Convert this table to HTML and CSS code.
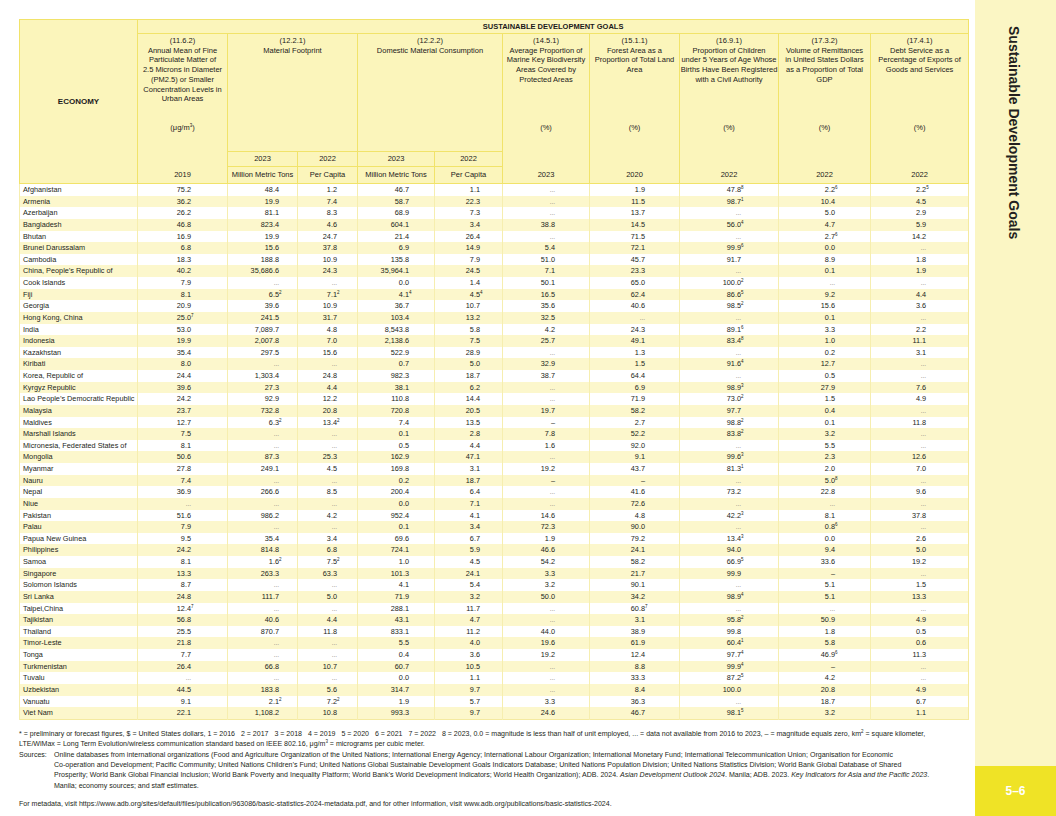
FILE: index.html
```html
<!DOCTYPE html>
<html lang="en">
<head>
<meta charset="utf-8">
<title>Sustainable Development Goals</title>
<link rel="stylesheet" href="styles.css">
</head>
<body>
<div class="page">
  <main class="main">
    <table class="sdg">
      <colgroup>
        <col class="w-econ"><col class="w1"><col class="w2"><col class="w3"><col class="w4"><col class="w5"><col class="w6"><col class="w7"><col class="w8"><col class="w9"><col class="w10">
      </colgroup>
      <thead>
        <tr class="h-top">
          <th rowspan="4" class="econ">ECONOMY</th>
          <th colspan="10" class="goals">SUSTAINABLE DEVELOPMENT GOALS</th>
        </tr>
        <tr class="h-desc">
          <th rowspan="3"><div class="hd"><div class="top">(11.6.2)<br>Annual Mean of Fine<br>Particulate Matter of<br>2.5 Microns in Diameter<br>(PM2.5) or Smaller<br>Concentration Levels in<br>Urban Areas</div><div class="unit">(μg/m<sup>3</sup>)</div><div class="yr">2019</div></div></th>
          <th colspan="2">(12.2.1)<br>Material Footprint</th>
          <th colspan="2">(12.2.2)<br>Domestic Material Consumption</th>
          <th rowspan="3"><div class="hd"><div class="top">(14.5.1)<br>Average Proportion of<br>Marine Key Biodiversity<br>Areas Covered by<br>Protected Areas</div><div class="unit">(%)</div><div class="yr">2023</div></div></th>
          <th rowspan="3"><div class="hd"><div class="top">(15.1.1)<br>Forest Area as a<br>Proportion of Total Land<br>Area</div><div class="unit">(%)</div><div class="yr">2020</div></div></th>
          <th rowspan="3"><div class="hd"><div class="top">(16.9.1)<br>Proportion of Children<br>under 5 Years of Age Whose<br>Births Have Been Registered<br>with a Civil Authority</div><div class="unit">(%)</div><div class="yr">2022</div></div></th>
          <th rowspan="3"><div class="hd"><div class="top">(17.3.2)<br>Volume of Remittances<br>in United States Dollars<br>as a Proportion of Total<br>GDP</div><div class="unit">(%)</div><div class="yr">2022</div></div></th>
          <th rowspan="3"><div class="hd"><div class="top">(17.4.1)<br>Debt Service as a<br>Percentage of Exports of<br>Goods and Services</div><div class="unit">(%)</div><div class="yr">2022</div></div></th>
        </tr>
        <tr class="h-year">
          <th>2023</th><th>2022</th><th>2023</th><th>2022</th>
        </tr>
        <tr class="h-unit">
          <th>Million Metric Tons</th><th>Per Capita</th><th>Million Metric Tons</th><th>Per Capita</th>
        </tr>
      </thead>
      <tbody>
        <tr><td>Afghanistan</td><td>75.2</td><td>48.4</td><td>1.2</td><td>46.7</td><td>1.1</td><td class="na">...</td><td>1.9</td><td>47.8<sup>8</sup></td><td>2.2<sup>6</sup></td><td>2.2<sup>5</sup></td></tr>
        <tr><td>Armenia</td><td>36.2</td><td>19.9</td><td>7.4</td><td>58.7</td><td>22.3</td><td class="na">...</td><td>11.5</td><td>98.7<sup>1</sup></td><td>10.4</td><td>4.5</td></tr>
        <tr><td>Azerbaijan</td><td>26.2</td><td>81.1</td><td>8.3</td><td>68.9</td><td>7.3</td><td class="na">...</td><td>13.7</td><td class="na">...</td><td>5.0</td><td>2.9</td></tr>
        <tr><td>Bangladesh</td><td>46.8</td><td>823.4</td><td>4.6</td><td>604.1</td><td>3.4</td><td>38.8</td><td>14.5</td><td>56.0<sup>4</sup></td><td>4.7</td><td>5.9</td></tr>
        <tr><td>Bhutan</td><td>16.9</td><td>19.9</td><td>24.7</td><td>21.4</td><td>26.4</td><td class="na">...</td><td>71.5</td><td class="na">...</td><td>2.7<sup>6</sup></td><td>14.2</td></tr>
        <tr><td>Brunei Darussalam</td><td>6.8</td><td>15.6</td><td>37.8</td><td>6.9</td><td>14.9</td><td>5.4</td><td>72.1</td><td>99.9<sup>6</sup></td><td>0.0</td><td class="na">...</td></tr>
        <tr><td>Cambodia</td><td>18.3</td><td>188.8</td><td>10.9</td><td>135.8</td><td>7.9</td><td>51.0</td><td>45.7</td><td>91.7</td><td>8.9</td><td>1.8</td></tr>
        <tr><td>China, People’s Republic of</td><td>40.2</td><td>35,686.6</td><td>24.3</td><td>35,964.1</td><td>24.5</td><td>7.1</td><td>23.3</td><td class="na">...</td><td>0.1</td><td>1.9</td></tr>
        <tr><td>Cook Islands</td><td>7.9</td><td class="na">...</td><td class="na">...</td><td>0.0</td><td>1.4</td><td>50.1</td><td>65.0</td><td>100.0<sup>2</sup></td><td class="na">...</td><td class="na">...</td></tr>
        <tr><td>Fiji</td><td>8.1</td><td>6.5<sup>2</sup></td><td>7.1<sup>2</sup></td><td>4.1<sup>4</sup></td><td>4.5<sup>4</sup></td><td>16.5</td><td>62.4</td><td>86.6<sup>5</sup></td><td>9.2</td><td>4.4</td></tr>
        <tr><td>Georgia</td><td>20.9</td><td>39.6</td><td>10.9</td><td>36.7</td><td>10.7</td><td>35.6</td><td>40.6</td><td>98.5<sup>2</sup></td><td>15.6</td><td>3.6</td></tr>
        <tr><td>Hong Kong, China</td><td>25.0<sup>7</sup></td><td>241.5</td><td>31.7</td><td>103.4</td><td>13.2</td><td>32.5</td><td class="na">...</td><td class="na">...</td><td>0.1</td><td class="na">...</td></tr>
        <tr><td>India</td><td>53.0</td><td>7,089.7</td><td>4.8</td><td>8,543.8</td><td>5.8</td><td>4.2</td><td>24.3</td><td>89.1<sup>6</sup></td><td>3.3</td><td>2.2</td></tr>
        <tr><td>Indonesia</td><td>19.9</td><td>2,007.8</td><td>7.0</td><td>2,138.6</td><td>7.5</td><td>25.7</td><td>49.1</td><td>83.4<sup>8</sup></td><td>1.0</td><td>11.1</td></tr>
        <tr><td>Kazakhstan</td><td>35.4</td><td>297.5</td><td>15.6</td><td>522.9</td><td>28.9</td><td class="na">...</td><td>1.3</td><td class="na">...</td><td>0.2</td><td>3.1</td></tr>
        <tr><td>Kiribati</td><td>8.0</td><td class="na">...</td><td class="na">...</td><td>0.7</td><td>5.0</td><td>32.9</td><td>1.5</td><td>91.6<sup>4</sup></td><td>12.7</td><td class="na">...</td></tr>
        <tr><td>Korea, Republic of</td><td>24.4</td><td>1,303.4</td><td>24.8</td><td>982.3</td><td>18.7</td><td>38.7</td><td>64.4</td><td class="na">...</td><td>0.5</td><td class="na">...</td></tr>
        <tr><td>Kyrgyz Republic</td><td>39.6</td><td>27.3</td><td>4.4</td><td>38.1</td><td>6.2</td><td class="na">...</td><td>6.9</td><td>98.9<sup>3</sup></td><td>27.9</td><td>7.6</td></tr>
        <tr><td>Lao People’s Democratic Republic</td><td>24.2</td><td>92.9</td><td>12.2</td><td>110.8</td><td>14.4</td><td class="na">...</td><td>71.9</td><td>73.0<sup>2</sup></td><td>1.5</td><td>4.9</td></tr>
        <tr><td>Malaysia</td><td>23.7</td><td>732.8</td><td>20.8</td><td>720.8</td><td>20.5</td><td>19.7</td><td>58.2</td><td>97.7</td><td>0.4</td><td class="na">...</td></tr>
        <tr><td>Maldives</td><td>12.7</td><td>6.3<sup>2</sup></td><td>13.4<sup>2</sup></td><td>7.4</td><td>13.5</td><td>–</td><td>2.7</td><td>98.8<sup>2</sup></td><td>0.1</td><td>11.8</td></tr>
        <tr><td>Marshall Islands</td><td>7.5</td><td class="na">...</td><td class="na">...</td><td>0.1</td><td>2.8</td><td>7.8</td><td>52.2</td><td>83.8<sup>2</sup></td><td>3.2</td><td class="na">...</td></tr>
        <tr><td>Micronesia, Federated States of</td><td>8.1</td><td class="na">...</td><td class="na">...</td><td>0.5</td><td>4.4</td><td>1.6</td><td>92.0</td><td class="na">...</td><td>5.5</td><td class="na">...</td></tr>
        <tr><td>Mongolia</td><td>50.6</td><td>87.3</td><td>25.3</td><td>162.9</td><td>47.1</td><td class="na">...</td><td>9.1</td><td>99.6<sup>3</sup></td><td>2.3</td><td>12.6</td></tr>
        <tr><td>Myanmar</td><td>27.8</td><td>249.1</td><td>4.5</td><td>169.8</td><td>3.1</td><td>19.2</td><td>43.7</td><td>81.3<sup>1</sup></td><td>2.0</td><td>7.0</td></tr>
        <tr><td>Nauru</td><td>7.4</td><td class="na">...</td><td class="na">...</td><td>0.2</td><td>18.7</td><td>–</td><td>–</td><td class="na">...</td><td>5.0<sup>8</sup></td><td class="na">...</td></tr>
        <tr><td>Nepal</td><td>36.9</td><td>266.6</td><td>8.5</td><td>200.4</td><td>6.4</td><td class="na">...</td><td>41.6</td><td>73.2</td><td>22.8</td><td>9.6</td></tr>
        <tr><td>Niue</td><td class="na">...</td><td class="na">...</td><td class="na">...</td><td>0.0</td><td>7.1</td><td class="na">...</td><td>72.6</td><td class="na">...</td><td class="na">...</td><td class="na">...</td></tr>
        <tr><td>Pakistan</td><td>51.6</td><td>986.2</td><td>4.2</td><td>952.4</td><td>4.1</td><td>14.6</td><td>4.8</td><td>42.2<sup>3</sup></td><td>8.1</td><td>37.8</td></tr>
        <tr><td>Palau</td><td>7.9</td><td class="na">...</td><td class="na">...</td><td>0.1</td><td>3.4</td><td>72.3</td><td>90.0</td><td class="na">...</td><td>0.8<sup>6</sup></td><td class="na">...</td></tr>
        <tr><td>Papua New Guinea</td><td>9.5</td><td>35.4</td><td>3.4</td><td>69.6</td><td>6.7</td><td>1.9</td><td>79.2</td><td>13.4<sup>3</sup></td><td>0.0</td><td>2.6</td></tr>
        <tr><td>Philippines</td><td>24.2</td><td>814.8</td><td>6.8</td><td>724.1</td><td>5.9</td><td>46.6</td><td>24.1</td><td>94.0</td><td>9.4</td><td>5.0</td></tr>
        <tr><td>Samoa</td><td>8.1</td><td>1.6<sup>2</sup></td><td>7.5<sup>2</sup></td><td>1.0</td><td>4.5</td><td>54.2</td><td>58.2</td><td>66.9<sup>5</sup></td><td>33.6</td><td>19.2</td></tr>
        <tr><td>Singapore</td><td>13.3</td><td>263.3</td><td>63.3</td><td>101.3</td><td>24.1</td><td>3.3</td><td>21.7</td><td>99.9</td><td>–</td><td class="na">...</td></tr>
        <tr><td>Solomon Islands</td><td>8.7</td><td class="na">...</td><td class="na">...</td><td>4.1</td><td>5.4</td><td>3.2</td><td>90.1</td><td class="na">...</td><td>5.1</td><td>1.5</td></tr>
        <tr><td>Sri Lanka</td><td>24.8</td><td>111.7</td><td>5.0</td><td>71.9</td><td>3.2</td><td>50.0</td><td>34.2</td><td>98.9<sup>4</sup></td><td>5.1</td><td>13.3</td></tr>
        <tr><td>Taipei,China</td><td>12.4<sup>7</sup></td><td class="na">...</td><td class="na">...</td><td>288.1</td><td>11.7</td><td class="na">...</td><td>60.8<sup>7</sup></td><td class="na">...</td><td class="na">...</td><td class="na">...</td></tr>
        <tr><td>Tajikistan</td><td>56.8</td><td>40.6</td><td>4.4</td><td>43.1</td><td>4.7</td><td class="na">...</td><td>3.1</td><td>95.8<sup>2</sup></td><td>50.9</td><td>4.9</td></tr>
        <tr><td>Thailand</td><td>25.5</td><td>870.7</td><td>11.8</td><td>833.1</td><td>11.2</td><td>44.0</td><td>38.9</td><td>99.8</td><td>1.8</td><td>0.5</td></tr>
        <tr><td>Timor-Leste</td><td>21.8</td><td class="na">...</td><td class="na">...</td><td>5.5</td><td>4.0</td><td>19.6</td><td>61.9</td><td>60.4<sup>1</sup></td><td>5.8</td><td>0.6</td></tr>
        <tr><td>Tonga</td><td>7.7</td><td class="na">...</td><td class="na">...</td><td>0.4</td><td>3.6</td><td>19.2</td><td>12.4</td><td>97.7<sup>4</sup></td><td>46.9<sup>6</sup></td><td>11.3</td></tr>
        <tr><td>Turkmenistan</td><td>26.4</td><td>66.8</td><td>10.7</td><td>60.7</td><td>10.5</td><td class="na">...</td><td>8.8</td><td>99.9<sup>4</sup></td><td>–</td><td class="na">...</td></tr>
        <tr><td>Tuvalu</td><td class="na">...</td><td class="na">...</td><td class="na">...</td><td>0.0</td><td>1.1</td><td class="na">...</td><td>33.3</td><td>87.2<sup>5</sup></td><td>4.2</td><td class="na">...</td></tr>
        <tr><td>Uzbekistan</td><td>44.5</td><td>183.8</td><td>5.6</td><td>314.7</td><td>9.7</td><td class="na">...</td><td>8.4</td><td>100.0</td><td>20.8</td><td>4.9</td></tr>
        <tr><td>Vanuatu</td><td>9.1</td><td>2.1<sup>2</sup></td><td>7.2<sup>2</sup></td><td>1.9</td><td>5.7</td><td>3.3</td><td>36.3</td><td class="na">...</td><td>18.7</td><td>6.7</td></tr>
        <tr><td>Viet Nam</td><td>22.1</td><td>1,108.2</td><td>10.8</td><td>993.3</td><td>9.7</td><td>24.6</td><td>46.7</td><td>98.1<sup>5</sup></td><td>3.2</td><td>1.1</td></tr>
      </tbody>
    </table>

    <div class="notes">
      <p>* = preliminary or forecast figures, $ = United States dollars, 1 = 2016&nbsp;&nbsp; 2 = 2017&nbsp;&nbsp; 3 = 2018&nbsp;&nbsp; 4 = 2019&nbsp;&nbsp; 5 = 2020&nbsp;&nbsp; 6 = 2021&nbsp;&nbsp; 7 = 2022&nbsp;&nbsp; 8 = 2023, 0.0 = magnitude is less than half of unit employed, ... = data not available from 2016 to 2023, – = magnitude equals zero, km<sup>2</sup> = square kilometer,<br>LTE/WiMax = Long Term Evolution/wireless communication standard based on IEEE 802.16, μg/m<sup>3</sup> = micrograms per cubic meter.</p>
      <div class="src">
        <span class="src-label">Sources:</span>
        <p class="src-text">Online databases from international organizations (Food and Agriculture Organization of the United Nations; International Energy Agency; International Labour Organization; International Monetary Fund; International Telecommunication Union; Organisation for Economic<br>Co-operation and Development; Pacific Community; United Nations Children’s Fund; United Nations Global Sustainable Development Goals Indicators Database; United Nations Population Division; United Nations Statistics Division; World Bank Global Database of Shared<br>Prosperity; World Bank Global Financial Inclusion; World Bank Poverty and Inequality Platform; World Bank’s World Development Indicators; World Health Organization); ADB. 2024. <i>Asian Development Outlook 2024</i>. Manila; ADB. 2023. <i>Key Indicators for Asia and the Pacific 2023</i>.<br>Manila; economy sources; and staff estimates.</p>
      </div>
      <p class="meta">For metadata, visit https://www.adb.org/sites/default/files/publication/963086/basic-statistics-2024-metadata.pdf, and for other information, visit www.adb.org/publications/basic-statistics-2024.</p>
    </div>
  </main>

  <aside class="side">
    <div class="side-title"><span>Sustainable Development Goals</span></div>
    <div class="side-num">5–6</div>
  </aside>
</div>
</body>
</html>
```
FILE: styles.css
```css
* { box-sizing: border-box; margin: 0; padding: 0; }

body {
  margin: 0;
  background: #ffffff;
  color: #231f20;
  font-family: "Liberation Sans", Arial, sans-serif;
}

.page {
  display: flex;
  width: 1056px;
  height: 816px;
}

.main {
  width: 975px;
  flex: none;
  padding: 19px 0 0 19px;
}

/* ---------- table ---------- */
.sdg {
  width: 949px;
  border-collapse: collapse;
  table-layout: fixed;
}

.w-econ { width: 118px; }
.w1 { width: 90px; }
.w2 { width: 70px; }
.w3 { width: 60px; }
.w4 { width: 77px; }
.w5 { width: 68px; }
.w6 { width: 87px; }
.w7 { width: 90px; }
.w8 { width: 99px; }
.w9 { width: 92px; }
.w10 { width: 98px; }

.sdg thead th {
  background: #fbf5bb;
  border: 1px solid #f1e36a;
  color: #1c1a1b;
  font-weight: normal;
  font-size: 7.5px;
  line-height: 9.7px;
  text-align: center;
  vertical-align: top;
  white-space: nowrap;
  padding: 2px 0 0;
}

.sdg thead th.econ {
  font-weight: bold;
  font-size: 8px;
  vertical-align: middle;
  padding: 0;
}

.h-top { height: 14px; }
.h-desc { height: 117px; }
.h-year { height: 15px; }
.h-unit { height: 17px; }

.sdg thead th.goals {
  font-weight: bold;
  text-align: center;
  vertical-align: middle;
  padding: 0;
}

.h-year th, .h-unit th {
  vertical-align: middle !important;
  padding: 0 !important;
}

.hd {
  height: 147px;
  display: flex;
  flex-direction: column;
}

.hd .top { height: 86px; }
.hd .unit { height: 12px; line-height: 12px; }
.hd .yr { margin-top: auto; height: 17px; line-height: 17px; }

.sdg thead sup {
  font-size: 4.5px;
  vertical-align: 3px;
  line-height: 1;
}

.sdg tbody {
  border: 1px solid #f4eaa0;
}

.sdg tbody td {
  height: 11.62px;
  font-size: 7.3px;
  line-height: 11.62px;
  text-align: right;
  white-space: nowrap;
  border-left: 1px solid #f6eeaf;
  padding: 0;
}

.sdg tbody tr:nth-child(even) td { background: #fcf7cc; }

.sdg tbody td:nth-child(1) { text-align: left; padding-left: 3px; }
.sdg tbody td:nth-child(2) { padding-right: 36px; }
.sdg tbody td:nth-child(3) { padding-right: 18px; }
.sdg tbody td:nth-child(4) { padding-right: 20px; }
.sdg tbody td:nth-child(5) { padding-right: 25px; }
.sdg tbody td:nth-child(6) { padding-right: 22px; }
.sdg tbody td:nth-child(7) { padding-right: 34px; }
.sdg tbody td:nth-child(8) { padding-right: 34px; }
.sdg tbody td:nth-child(9) { padding-right: 37px; }
.sdg tbody td:nth-child(10) { padding-right: 35px; }
.sdg tbody td:nth-child(11) { padding-right: 42px; }

.sdg tbody td.na { color: #8a8680; font-size: 6.4px; }

.sdg tbody sup {
  display: inline-block;
  width: 0;
  font-size: 4.5px;
  line-height: 1;
  vertical-align: 3px;
  text-align: left;
}

/* ---------- notes ---------- */
.notes {
  width: 949px;
  margin-top: 9px;
  font-size: 7.05px;
  line-height: 10.4px;
}

.notes sup {
  font-size: 4.5px;
  line-height: 1;
  vertical-align: 3px;
}

.src { display: flex; }
.src-label { width: 35px; flex: none; }
.src-text { flex: 1; white-space: nowrap; }

.meta { margin-top: 8px; }

/* ---------- side ---------- */
.side {
  width: 81px;
  flex: none;
  display: flex;
  flex-direction: column;
  background: #fbf6c4;
}

.side-title {
  flex: 1;
  display: flex;
  justify-content: center;
  padding: 26px 4px 0 0;
}

.side-title span {
  writing-mode: vertical-rl;
  font-weight: bold;
  font-size: 14px;
  color: #231f20;
  white-space: nowrap;
}

.side-num {
  height: 50px;
  flex: none;
  display: flex;
  align-items: center;
  justify-content: center;
  background: #efe326;
  color: #ffffff;
  font-weight: bold;
  font-size: 12px;
}
```
